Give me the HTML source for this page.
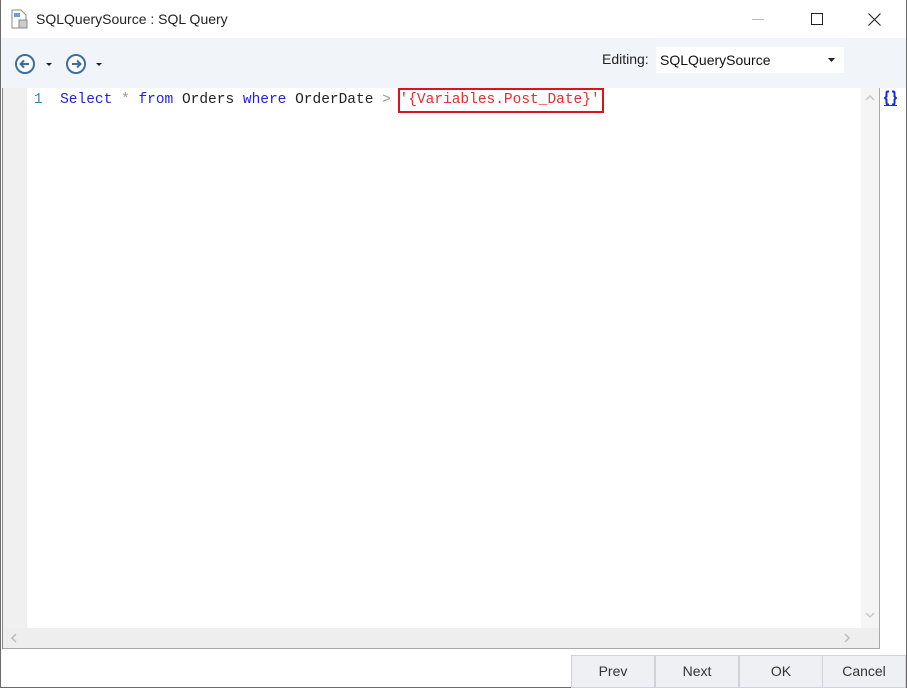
<!DOCTYPE html>
<html><head><style>
*{margin:0;padding:0;box-sizing:border-box}
body{width:907px;height:688px;position:relative;background:#fff;font-family:"Liberation Sans",sans-serif;overflow:hidden}
.win{position:absolute;left:0;top:0;width:907px;height:688px;border:1px solid #6b6b6b;border-top:none}
.title{position:absolute;left:36px;top:11px;font-size:14px;color:#222}
.tb{position:absolute;left:1px;top:38px;width:905px;height:50px;background:#f1f4f8}
.ed{position:absolute;left:2px;top:88px;width:878px;height:561px;background:#fff;border-bottom:1px solid #a8a8a8;border-right:1px solid #a8a8a8;border-left:1px solid #888}
.gut{position:absolute;left:0;top:0;width:24px;height:540px;background:#f0f0f0}
.hs{position:absolute;left:0;top:540px;width:876px;height:20px;background:#eeeeee}
.vs{position:absolute;left:858px;top:0;width:18px;height:540px;background:#f5f5f5}
.code{position:absolute;left:31px;top:3px;font-family:"Liberation Mono",monospace;font-size:14.5px;line-height:18px;white-space:pre;color:#222}
.kw{color:#2222dd}.gr{color:#999}.rd{color:#e03030}
.box{position:absolute;left:398px;top:88px;width:206px;height:25px;border:2px solid #d9141e}
.btn{position:absolute;top:655px;height:33px;width:84px;background:#eef0f3;border:1px solid #cfd3d8;font-size:14px;color:#333;text-align:center;line-height:31px}
.sel{position:absolute;left:656px;top:47px;width:188px;height:26px;background:#fff;font-size:14px;line-height:26px;padding-left:4px;color:#111}
</style></head><body>
<div class="win"></div>
<svg style="position:absolute;left:11px;top:9px" width="18" height="20"><path d="M1 1h9l5 5v13H1z" fill="#fff" stroke="#888"/><rect x="3" y="4" width="6" height="4" fill="#6aa0d8"/><rect x="8" y="11" width="8" height="8" fill="#ccc" stroke="#888"/></svg>
<div class="title">SQLQuerySource : SQL Query</div>
<div style="position:absolute;left:752px;top:19px;width:12px;height:1px;background:#bbb"></div>
<div style="position:absolute;left:811px;top:13px;width:12px;height:12px;border:1px solid #222"></div>
<svg style="position:absolute;left:868px;top:13px" width="13" height="13"><path d="M0.5 0.5l12 12M12.5 0.5l-12 12" stroke="#222" stroke-width="1.1"/></svg>
<div class="tb"></div>
<svg style="position:absolute;left:14px;top:53px" width="95" height="22"><circle cx="11" cy="11" r="9" fill="#fff" stroke="#3a6ea5" stroke-width="2"/><path d="M15 11H7M10 7.5L6.5 11 10 14.5" stroke="#3a6ea5" stroke-width="2" fill="none"/><path d="M32 10h6l-3 3z" fill="#222"/><circle cx="62" cy="11" r="9" fill="#fff" stroke="#3a6ea5" stroke-width="2"/><path d="M58 11h8M63 7.5L66.5 11 63 14.5" stroke="#3a6ea5" stroke-width="2" fill="none"/><path d="M82 10h6l-3 3z" fill="#222"/></svg>
<div style="position:absolute;left:602px;top:51px;font-size:14px;color:#222">Editing:</div>
<div class="sel">SQLQuerySource<svg style="position:absolute;left:172px;top:11px" width="8" height="5"><path d="M0 0h7l-3.5 4z" fill="#222"/></svg></div>
<div class="ed"><div class="gut"></div><div class="vs"><svg style="position:absolute;left:4px;top:6px" width="10" height="7"><path d="M1 6l4-4 4 4" stroke="#c8c8c8" fill="none" stroke-width="1.5"/></svg><svg style="position:absolute;left:4px;top:524px" width="10" height="7"><path d="M1 1l4 4 4-4" stroke="#c8c8c8" fill="none" stroke-width="1.5"/></svg></div>
<div class="hs"><svg style="position:absolute;left:7px;top:5px" width="7" height="10"><path d="M6 1L2 5l4 4" stroke="#bbb" fill="none" stroke-width="1.5"/></svg><svg style="position:absolute;left:841px;top:5px" width="7" height="10"><path d="M1 1l4 4-4 4" stroke="#bbb" fill="none" stroke-width="1.5"/></svg></div>
<div class="code"><span style="color:#3a8aa8">1</span>  <span class="kw">Select</span> <span class="gr">*</span> <span class="kw">from</span> Orders <span class="kw">where</span> OrderDate <span class="gr">&gt;</span> <span class="rd">'{Variables.Post_Date}'</span></div>
</div>
<div class="box"></div>
<svg style="position:absolute;left:884px;top:90px" width="13" height="16"><path d="M5 1.5H4Q2.5 1.5 2.5 3v3.5L1 8l1.5 1.5V13q0 1.5 1.5 1.5h1M8 1.5h1q1.5 0 1.5 1.5v3.5L12 8l-1.5 1.5V13q0 1.5-1.5 1.5H8" stroke="#1a2bd0" stroke-width="2" fill="none"/><path d="M0 15.5h13" stroke="#1a2bd0"/></svg>
<div class="btn" style="left:571px">Prev</div>
<div class="btn" style="left:655px">Next</div>
<div class="btn" style="left:739px">OK</div>
<div class="btn" style="left:822px;width:84px">Cancel</div>
</body></html>
